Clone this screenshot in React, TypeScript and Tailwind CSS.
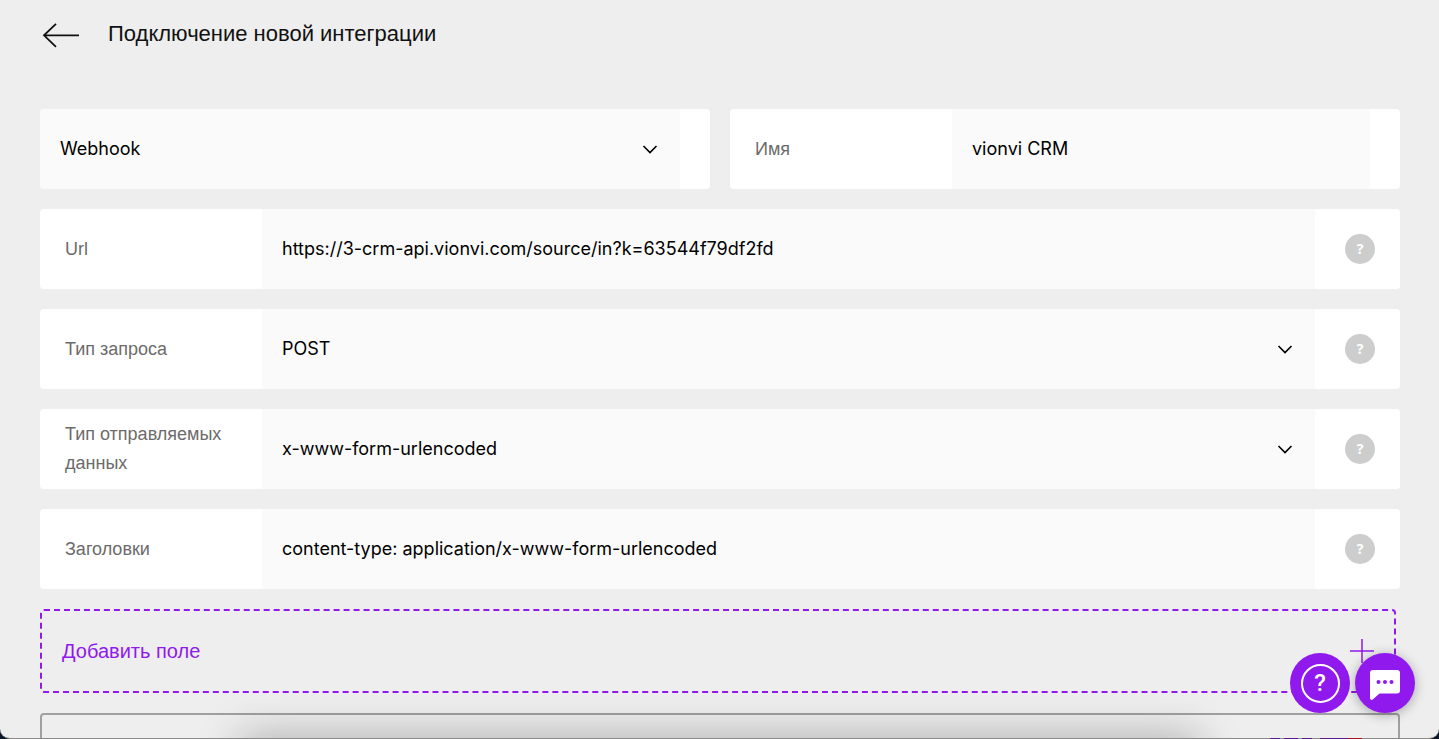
import { useState } from 'react';
import type { ReactNode } from 'react';

function Chevron() {
  return (
    <svg className="pointer-events-none absolute top-1/2 right-[22px] -translate-y-1/2" width="16" height="10" viewBox="0 0 16 10" fill="none" aria-hidden="true">
      <path d="M1.5 2 8 8.500l6.500-6.500" stroke="#000" strokeWidth="1.6" />
    </svg>
  );
}

function Hint() {
  return (
    <div className="flex w-[85px] shrink-0 items-center justify-end bg-white pr-[25px]">
      <button type="button" aria-label="Подсказка" className="flex size-[30px] items-center justify-center rounded-full bg-[#cdcdcd] font-['Noto_Sans',sans-serif] text-[14px] font-bold leading-4 text-white">
        ?
      </button>
    </div>
  );
}

const valueStyle = "h-full w-full bg-[#fafafa] pb-0.5 pl-5 font-['Inter','Liberation_Sans',sans-serif] text-[18px] text-black outline-none";

type RowProps = { id: string; label?: string; end: ReactNode; children: ReactNode };

function Row({ id, label, end, children }: RowProps) {
  return (
    <div className="flex h-20 overflow-hidden rounded bg-white">
      {label && (
        <label htmlFor={id} className="flex w-[222px] shrink-0 items-center pl-[25px] text-[18px] leading-[29px] text-[#6b6b6b]">
          {label}
        </label>
      )}
      <div className="relative min-w-0 flex-1">{children}</div>
      {end}
    </div>
  );
}

export default function App() {
  const [name, setName] = useState('vionvi CRM');
  const [url, setUrl] = useState('https://3-crm-api.vionvi.com/source/in?k=63544f79df2fd');
  const [headers, setHeaders] = useState('content-type: application/x-www-form-urlencoded');

  const narrowEnd = <div className="w-[30px] shrink-0" />;

  return (
    <div className="relative h-screen bg-[#0a1726] font-['Liberation_Sans',Arial,sans-serif]">
      <main className="relative flex h-full flex-col overflow-hidden rounded-b-[10px] border-b border-[#8a8a8a] bg-[#eee] pr-[39px] pl-10">
        {/* shadow along the bottom edge */}
        <div className="pointer-events-none absolute inset-x-[250px] -bottom-12 h-10 shadow-[0_0_44px_10px_rgba(0,0,0,0.27)]" />

        <header className="flex h-[109px] shrink-0 items-start gap-7 pt-5">
          <a href="#back" aria-label="Назад">
            <svg width="40" height="30" viewBox="0 0 40 30" fill="none" stroke="#111" strokeWidth="1.8">
              <path d="M39 15.3H4M16 3.8 4 15.3l12 11.500" />
            </svg>
          </a>
          <h1 className="text-[22px] leading-7 text-[#111]">Подключение новой интеграции</h1>
        </header>

        <form className="flex flex-col gap-5" onSubmit={e => e.preventDefault()}>
          <div className="grid grid-cols-2 gap-5">
            <Row id="kind" end={narrowEnd}>
              <select id="kind" aria-label="Тип интеграции" className={`${valueStyle} appearance-none`}>
                <option>Webhook</option>
              </select>
              <Chevron />
            </Row>
            <Row id="name" label="Имя" end={narrowEnd}>
              <input id="name" value={name} onChange={e => setName(e.target.value)} className={valueStyle} />
            </Row>
          </div>

          <Row id="url" label="Url" end={<Hint />}>
            <input id="url" value={url} onChange={e => setUrl(e.target.value)} className={valueStyle} />
          </Row>
          <Row id="method" label="Тип запроса" end={<Hint />}>
            <select id="method" className={`${valueStyle} appearance-none`}>
              <option>POST</option>
              <option>GET</option>
            </select>
            <Chevron />
          </Row>
          <Row id="format" label="Тип отправляемых данных" end={<Hint />}>
            <select id="format" className={`${valueStyle} appearance-none`}>
              <option>x-www-form-urlencoded</option>
              <option>json</option>
            </select>
            <Chevron />
          </Row>
          <Row id="headers" label="Заголовки" end={<Hint />}>
            <input id="headers" value={headers} onChange={e => setHeaders(e.target.value)} className={valueStyle} />
          </Row>

          <button type="button" className="mr-1 flex h-[84px] items-center justify-between rounded border-2 border-dashed border-[#9019ee] px-5 text-[20px] leading-7 text-[#9019ee]">
            Добавить поле
            <svg width="24" height="24" viewBox="0 0 24 24" fill="none" stroke="#9019ee" strokeWidth="1.5" aria-hidden="true">
              <path d="M12 0v24M0 12h24" />
            </svg>
          </button>

          <div className="h-20 rounded border-2 border-[#a0a0a0]" />
        </form>
      </main>

      {/* slivers of the window behind */}
      <div className="pointer-events-none absolute right-[77px] bottom-0 flex h-px gap-1">
        <span className="w-2.5 bg-[#5a1a8e]" />
        <span className="w-3.5 bg-[#5a1a8e]" />
        <span className="mr-1 w-2.5 bg-[#5a1a8e]" />
        <span className="-mr-1 w-7 bg-[#5a1a8e]" />
        <span className="w-3.5 bg-[#b0101c]" />
      </div>

      <div className="fixed right-6 bottom-[26px] flex gap-[5px]">
        <button type="button" aria-label="Помощь" className="flex size-[60px] items-center justify-center rounded-full bg-[#9019ee]">
          <span className="flex size-[39px] items-center justify-center rounded-full border-2 border-white font-['Roboto',sans-serif] text-[24px] font-medium leading-7 text-white">?</span>
        </button>
        <button type="button" aria-label="Чат" className="flex size-[60px] items-center justify-center rounded-full bg-[#9019ee] shadow-[0_2px_12px_rgba(0,0,0,0.3)]">
          <svg className="mt-1" width="30" height="30" viewBox="0 0 30 30" aria-hidden="true">
            <path d="M3 0h24a3 3 0 0 1 3 3v17.500a3 3 0 0 1-3 3H9.500L3 29.300c-1.200 1.200-3 .6-3-1.200V3a3 3 0 0 1 3-3Z" fill="#fff" />
            <g fill="#9019ee">
              <circle cx="8.500" cy="12" r="2" />
              <circle cx="15" cy="12" r="2" />
              <circle cx="21.500" cy="12" r="2" />
            </g>
          </svg>
        </button>
      </div>
    </div>
  );
}
